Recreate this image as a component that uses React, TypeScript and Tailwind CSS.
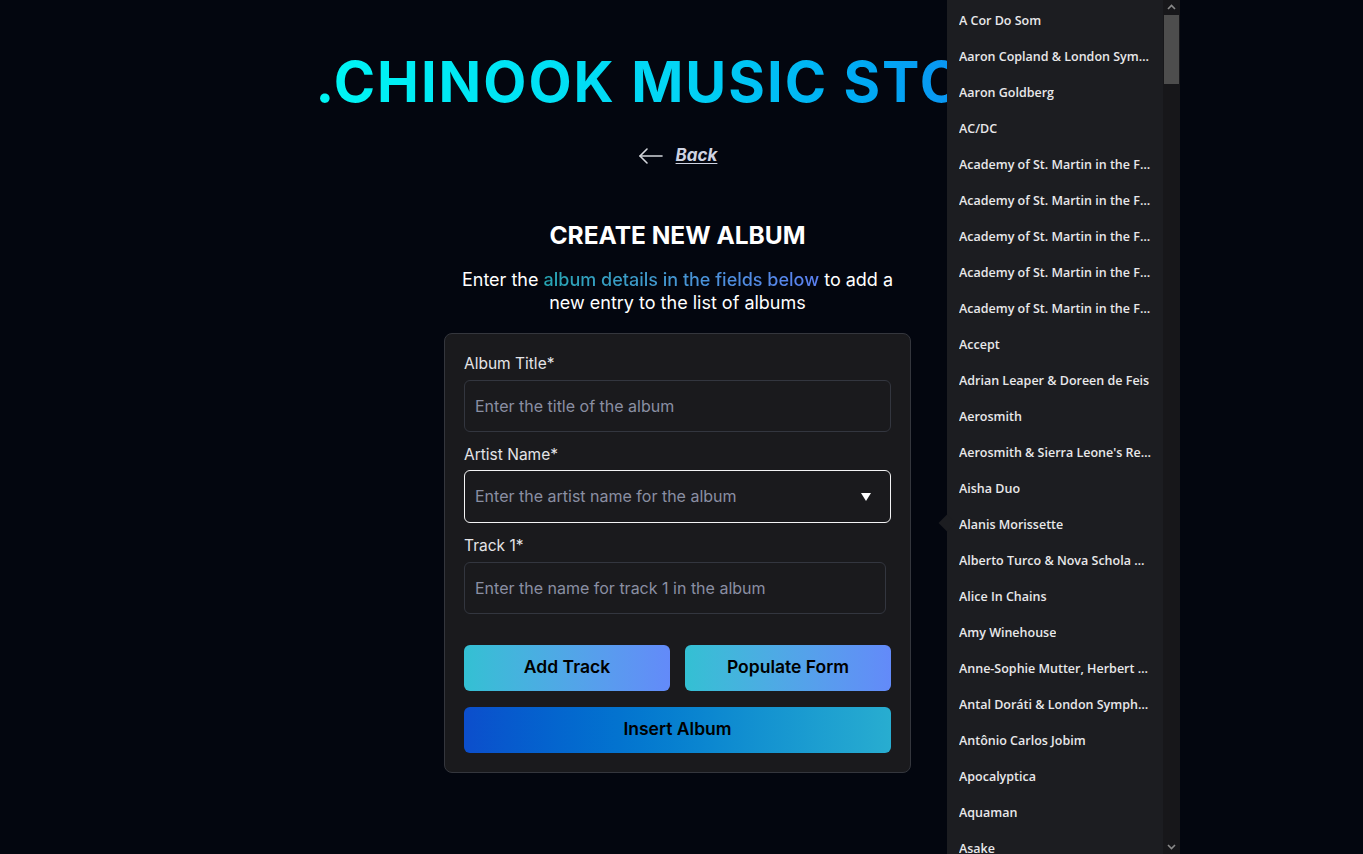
import React from 'react'

const artists = [
  'A Cor Do Som',
  'Aaron Copland & London Symphony Orchestra',
  'Aaron Goldberg',
  'AC/DC',
  'Academy of St. Martin in the Fields & Sir Neville Marriner',
  'Academy of St. Martin in the Fields Chamber Ensemble & Sir Neville Marriner',
  'Academy of St. Martin in the Fields, John Birch, Sir Neville Marriner & Sylvia McNair',
  'Academy of St. Martin in the Fields, Sir Neville Marriner & Thurston Dart',
  'Academy of St. Martin in the Fields, Sir Neville Marriner & William Bennett',
  'Accept',
  'Adrian Leaper & Doreen de Feis',
  'Aerosmith',
  "Aerosmith & Sierra Leone's Refugee Allstars",
  'Aisha Duo',
  'Alanis Morissette',
  'Alberto Turco & Nova Schola Gregoriana',
  'Alice In Chains',
  'Amy Winehouse',
  'Anne-Sophie Mutter, Herbert Von Karajan & Wiener Philharmoniker',
  'Antal Doráti & London Symphony Orchestra',
  'Antônio Carlos Jobim',
  'Apocalyptica',
  'Aquaman',
  'Asake',
]

const font = { fontFamily: '"Inter", "Noto Sans", sans-serif' }

function Field({ label, placeholder, narrow }: { label: string; placeholder: string; narrow?: boolean }) {
  return (
    <div className="flex flex-col">
      <label className="text-[15.5px] leading-[20px] text-[#e4e4e7] mb-[6px]">{label}</label>
      <div
        className={`h-[52px] rounded-md border border-[#33363f] bg-[#1a1a1d] flex items-center px-[10px] text-[16px] text-[#8a8fa3] ${narrow ? 'mr-[5px]' : ''}`}
      >
        {placeholder}
      </div>
    </div>
  )
}

export default function App() {
  return (
    <div className="relative min-h-screen w-full overflow-hidden bg-[#03060f]" style={font}>
      <div className="flex flex-col items-center pt-[52px] pr-[8px]">
        <h1 className="text-[56px] leading-[60px] font-bold tracking-[2px] whitespace-nowrap bg-gradient-to-r from-[#00f6f4] via-[#03d4f4] to-[#1580f0] bg-clip-text text-transparent">
          .CHINOOK MUSIC STORE
        </h1>

        <a className="mt-[31px] flex items-center gap-[12px] text-[#cfd3e2]">
          <svg width="26" height="20" viewBox="0 0 26 20" fill="none" stroke="#d4d6dc" strokeWidth="1.6" strokeLinecap="round" strokeLinejoin="round">
            <path d="M24 10H2" />
            <path d="M9 3L2 10L9 17" />
          </svg>
          <span className="text-[17px] font-bold italic underline underline-offset-2">Back</span>
        </a>

        <h2 className="mt-[50px] text-[24.5px] leading-[32px] font-bold text-white">CREATE NEW ALBUM</h2>
        <p className="mt-[17px] w-[445px] text-center text-[18px] leading-[23px] text-white">
          Enter the{' '}
          <span className="bg-gradient-to-r from-[#25a5b3] to-[#5b80f2] bg-clip-text text-transparent font-medium">
            album details in the fields below
          </span>{' '}
          to add a new entry to the list of albums
        </p>

        <div className="mt-[19px] w-[467px] rounded-lg border border-[#34363d] bg-[#1a1a1d] px-[19px] pt-[20px] pb-[19px]">
          <div className="flex flex-col gap-[13px]">
            <Field label="Album Title*" placeholder="Enter the title of the album" />
            <div className="flex flex-col">
              <label className="text-[15.5px] leading-[20px] text-[#e4e4e7] mb-[5px]">Artist Name*</label>
              <div className="h-[53px] rounded-md border border-[#f4f4f5] bg-[#1a1a1d] flex items-center justify-between px-[10px] text-[16px] text-[#8a8fa3]">
                <span>Enter the artist name for the album</span>
                <svg width="12" height="10" viewBox="0 0 12 10" className="mr-[8px] mt-[2px]">
                  <path d="M1 1H11L6 9Z" fill="#ffffff" />
                </svg>
              </div>
            </div>
            <Field label="Track 1*" placeholder="Enter the name for track 1 in the album" narrow />
          </div>

          <div className="mt-[31px] grid grid-cols-2 gap-[15px]">
            <button className="h-[46px] rounded-md bg-gradient-to-r from-[#33c0d3] to-[#638af9] text-[17.5px] font-semibold text-black">
              Add Track
            </button>
            <button className="h-[46px] rounded-md bg-gradient-to-r from-[#33c0d3] to-[#638af9] text-[17.5px] font-semibold text-black">
              Populate Form
            </button>
          </div>
          <button className="mt-[16px] h-[46px] w-full rounded-md bg-gradient-to-r from-[#0c4ecc] to-[#28add0] text-[17.5px] font-semibold text-black">
            Insert Album
          </button>
        </div>
      </div>

      {/* open artist dropdown */}
      <div className="absolute left-[947px] top-0 flex h-[854px] w-[233px] bg-[#1c1d21]" style={{ fontFamily: '"Open Sans", "Noto Sans", sans-serif' }}>
        <div className="absolute left-[-6px] top-[517px] h-[12px] w-[12px] rotate-45 bg-[#1c1d21]" />
        <ul className="flex-1 min-w-0 pt-[3px]">
          {artists.map((a, i) => (
            <li key={i} className="h-[36px] flex items-center pl-[12px] pr-[12px] text-[12.5px] font-semibold text-[#e8e8ea]">
              <span className="truncate">{a}</span>
            </li>
          ))}
        </ul>
        <div className="relative w-[17px] bg-[#17171a] flex flex-col items-center">
          <svg width="9" height="6" viewBox="0 0 9 6" className="mt-[4px]">
            <path d="M1 5L4.5 1.5L8 5" stroke="#8a8a8a" strokeWidth="1.6" fill="none" />
          </svg>
          <div className="mt-[5px] h-[69px] w-[15px] bg-[#4d4d4d]" />
          <svg width="9" height="6" viewBox="0 0 9 6" className="absolute bottom-[4px]">
            <path d="M1 1L4.5 4.5L8 1" stroke="#8a8a8a" strokeWidth="1.6" fill="none" />
          </svg>
        </div>
      </div>
    </div>
  )
}
